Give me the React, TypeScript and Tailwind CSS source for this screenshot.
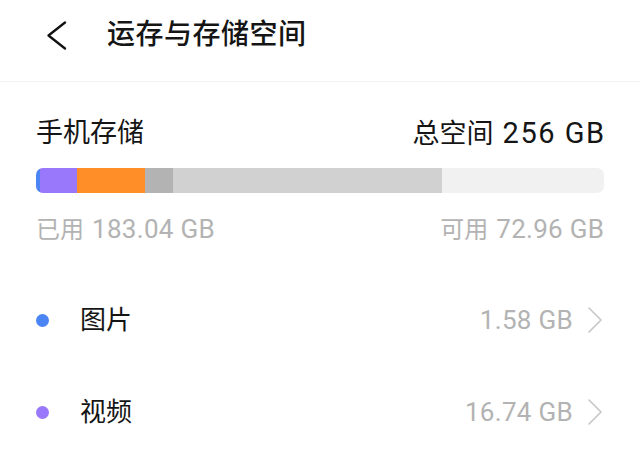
type Segment = { name: string; gb: number; color: string };

const TOTAL_GB = 256;
const USED_GB = 183.04;

// rough split of used space, read off the bar
const segments: Segment[] = [
  { name: 'pictures', gb: 1.58, color: '#4a84f5' },
  { name: 'videos', gb: 16.74, color: '#9a78fb' },
  { name: 'apps', gb: 30.6, color: '#ff8d28' },
  { name: 'system', gb: 13.0, color: '#b3b3b3' },
  { name: 'other', gb: USED_GB - 1.58 - 16.74 - 30.6 - 13.0, color: '#d1d1d1' },
];

const categories = [
  { label: '图片', size: '1.58 GB', dot: 'bg-[#4a84f5]' },
  { label: '视频', size: '16.74 GB', dot: 'bg-[#9a78fb]' },
];

const font = "font-['Roboto','Noto_Sans_CJK_SC',sans-serif]";

function BackIcon() {
  return (
    <svg width="21" height="29" viewBox="0 0 21 29" fill="none" stroke="#111" strokeWidth="2.3" strokeLinecap="round" strokeLinejoin="round">
      <polyline points="19,1.5 2.5,14.5 19,27.5" />
    </svg>
  );
}

function RowChevron() {
  return (
    <svg width="16" height="26" viewBox="0 0 16 26" fill="none" stroke="#c6c6c6" strokeWidth="1.6" strokeLinecap="round" strokeLinejoin="round">
      <polyline points="2,1 14,13 2,25" />
    </svg>
  );
}

export default function App() {
  return (
    <div className={`w-[640px] h-[460px] overflow-hidden bg-white text-[#151515] ${font}`}>
      <header className="h-[82px] border-b border-[#f2f2f2]">
        <div className="flex h-[70px] items-center pl-[46px]">
          <BackIcon />
          <h1 className="ml-[40px] text-[28px] font-medium leading-none tracking-[0.5px]">运存与存储空间</h1>
        </div>
      </header>

      <section className="px-[36px]">
        <div className="mt-[33px] flex h-[36px] items-center justify-between text-[27px] leading-none">
          <span>手机存储</span>
          <span className="flex items-baseline gap-[9px]">
            总空间
            <span className="text-[29px] tracking-[1.5px] mr-[-1.5px]">{TOTAL_GB} GB</span>
          </span>
        </div>

        <div className="mt-[17px] flex h-[25px] overflow-hidden rounded-[7px] bg-[#f1f1f1]">
          {segments.map(s => (
            <div
              key={s.name}
              className="h-full"
              style={{ width: `${(s.gb / TOTAL_GB) * 100}%`, backgroundColor: s.color }}
            />
          ))}
        </div>

        <div className="mt-[18px] flex h-[36px] items-center justify-between text-[24px] leading-none text-[#b3b3b3]">
          <span className="flex items-baseline gap-[8px]">
            已用
            <span className="text-[26px] tracking-[0.3px]">{USED_GB.toFixed(2)} GB</span>
          </span>
          <span className="flex items-baseline gap-[8px]">
            可用
            <span className="text-[26px] tracking-[0.3px] mr-[-0.3px]">{(TOTAL_GB - USED_GB).toFixed(2)} GB</span>
          </span>
        </div>

        <ul className="mt-[27px]">
          {categories.map(c => (
            <li key={c.label} className="flex h-[92px] items-center">
              <span className={`h-[13px] w-[13px] rounded-full ${c.dot}`} />
              <span className="ml-[31px] text-[26px] leading-none">{c.label}</span>
              <span className="ml-auto text-[26px] leading-none tracking-[0.3px] text-[#b3b3b3]">{c.size}</span>
              <span className="ml-[14px] mr-[1px]">
                <RowChevron />
              </span>
            </li>
          ))}
        </ul>
      </section>
    </div>
  );
}
